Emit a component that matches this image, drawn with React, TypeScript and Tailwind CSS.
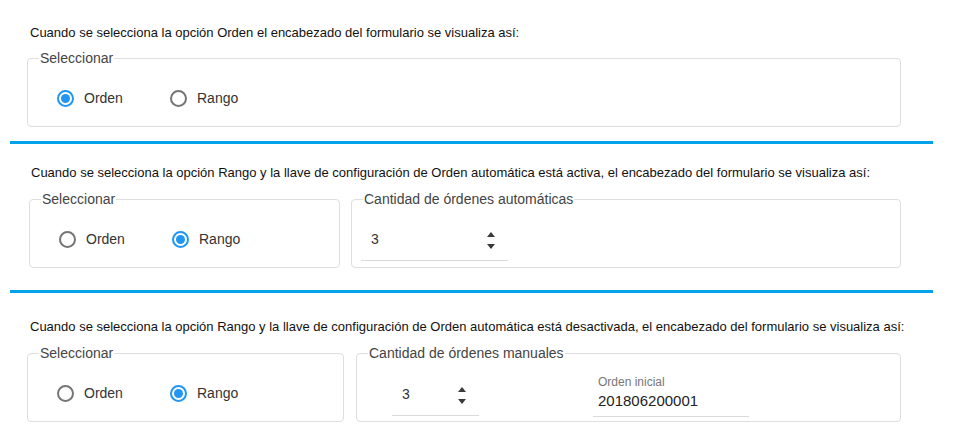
import React from "react";

function Radio({ label, checked }: { label: string; checked?: boolean }) {
  return (
    <label className="flex h-5 w-[113px] items-center gap-[10px]">
      <span
        className={
          checked
            ? "flex h-[17px] w-[17px] items-center justify-center rounded-full border-2 border-[#2196f3]"
            : "flex h-[17px] w-[17px] items-center justify-center rounded-full border-2 border-[#757575]"
        }
      >
        {checked && <span className="h-[9px] w-[9px] rounded-full bg-[#2196f3]" />}
      </span>
      <span className="text-[14px] leading-4 text-[#333]">{label}</span>
    </label>
  );
}

function Legend({ children }: { children: React.ReactNode }) {
  return (
    <legend className="ml-[11px] px-[1px] text-[14px] leading-4 text-[#444]">
      {children}
    </legend>
  );
}

function Seleccionar({ value, width }: { value: "orden" | "rango"; width: string }) {
  return (
    <fieldset className={`rounded-[4px] border border-[#dedede] ${width}`}>
      <Legend>Seleccionar</Legend>
      <div className="flex pl-[29px] pt-[22px] pb-[18px]">
        <Radio label="Orden" checked={value === "orden"} />
        <Radio label="Rango" checked={value === "rango"} />
      </div>
    </fieldset>
  );
}

function Spinner() {
  return (
    <div className="mt-[1px] flex flex-col gap-[7px]">
      <svg width="8" height="5" viewBox="0 0 8 5">
        <path d="M4 0L8 5H0z" fill="#3a3a3a" />
      </svg>
      <svg width="8" height="5" viewBox="0 0 8 5">
        <path d="M0 0h8L4 5z" fill="#3a3a3a" />
      </svg>
    </div>
  );
}

function NumberField({ width, top }: { width: string; top: string }) {
  return (
    <div className={`flex items-start justify-between border-b border-[#dadada] pl-[10px] pr-[13px] pb-[11px] ${width} ${top}`}>
      <span className="text-[14px] leading-4 text-[#333]">3</span>
      <Spinner />
    </div>
  );
}

function Texto({ children }: { children: React.ReactNode }) {
  return <p className="pl-[3px] text-[13px] leading-[15px] text-[#111]">{children}</p>;
}

function BlueLine() {
  return <div className="ml-[10px] h-[3px] w-[923px] bg-[#00a2e8]" />;
}

export default function App() {
  return (
    <div className="h-[428px] w-[966px] overflow-hidden bg-white font-['Liberation_Sans',Arial,sans-serif]">
      <section className="pl-[27px] pt-[25px] pb-[14px]">
        <Texto>Cuando se selecciona la opción Orden el encabezado del formulario se visualiza así:</Texto>
        <div className="mt-[10px]">
          <Seleccionar value="orden" width="w-[874px]" />
        </div>
      </section>

      <BlueLine />

      <section className="pl-[28px] pt-[21px] pb-[22px]">
        <Texto>
          Cuando se selecciona la opción Rango y la llave de configuración de Orden automática está activa, el
          encabezado del formulario se visualiza así:
        </Texto>
        <div className="mt-[11px] flex gap-[11px] pl-[1px]">
          <Seleccionar value="rango" width="w-[311px]" />
          <fieldset className="w-[550px] rounded-[4px] border border-[#dedede]">
            <Legend>Cantidad de órdenes automáticas</Legend>
            <div className="pl-[9px]">
              <NumberField width="w-[147px]" top="pt-[24px]" />
            </div>
          </fieldset>
        </div>
      </section>

      <BlueLine />

      <section className="pl-[27px] pt-[26px]">
        <Texto>
          Cuando se selecciona la opción Rango y la llave de configuración de Orden automática está desactivada, el
          encabezado del formulario se visualiza así:
        </Texto>
        <div className="mt-[11px] flex gap-[12px]">
          <Seleccionar value="rango" width="w-[317px]" />
          <fieldset className="w-[545px] rounded-[4px] border border-[#dedede]">
            <Legend>Cantidad de órdenes manuales</Legend>
            <div className="flex items-start gap-[114px] pl-[35px]">
              <NumberField width="w-[87px]" top="pt-[25px]" />
              <div className="w-[156px] border-b border-[#dadada] pl-[5px] pt-[14px] pb-[6px]">
                <div className="text-[12px] leading-[14px] text-[#777]">Orden inicial</div>
                <div className="mt-[3px] text-[15px] leading-[18px] text-[#222]">201806200001</div>
              </div>
            </div>
          </fieldset>
        </div>
      </section>
    </div>
  );
}
